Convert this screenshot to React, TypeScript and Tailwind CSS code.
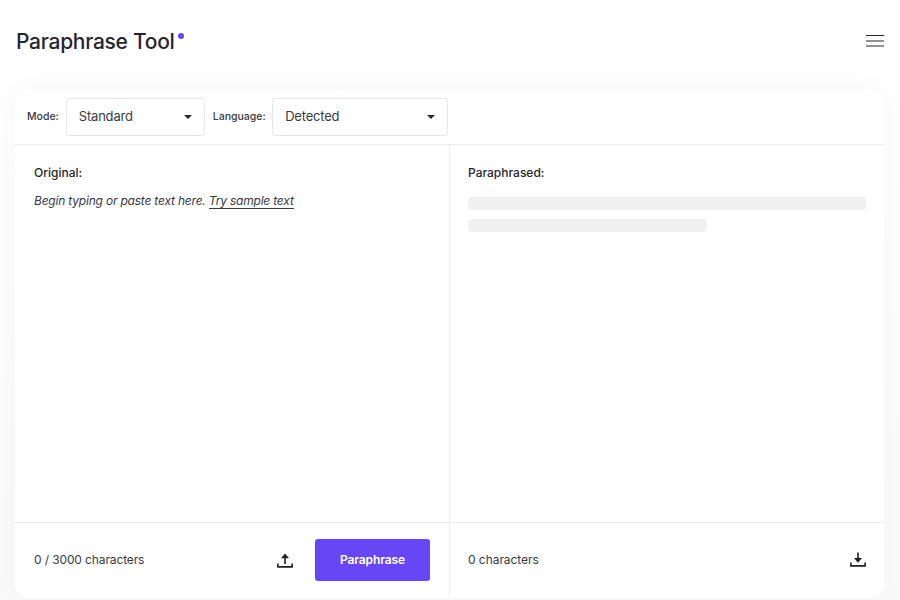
function Caret() {
  return <span className="h-0 w-0 border-x-[4px] border-t-[4px] border-x-transparent border-t-[#26262e]" />;
}

function Select({ value, width }: { value: string; width: string }) {
  return (
    <div className={`flex h-[38px] items-center justify-between rounded-[3px] border border-[#e6e6f0] bg-white pl-[12px] pr-[12px] text-[13px] tracking-[-0.2px] text-[#3a3a46] ${width}`}>
      <span>{value}</span>
      <Caret />
    </div>
  );
}

function UploadIcon() {
  return (
    <svg width="16" height="15" viewBox="0 0 16 15" fill="none" stroke="#1f1f27" strokeWidth="1.6">
      <path d="M8 11V3" />
      <path d="M8 .5 12 5.2H4Z" fill="#1f1f27" stroke="none" />
      <path d="M.9 10.5v3.4h14.2v-3.4" />
    </svg>
  );
}

function DownloadIcon() {
  return (
    <svg width="16" height="15" viewBox="0 0 16 15" fill="none" stroke="#1f1f27" strokeWidth="1.6">
      <path d="M8 .5v7" />
      <path d="M8 10.8 12 6H4Z" fill="#1f1f27" stroke="none" />
      <path d="M.9 10.5v3.4h14.2v-3.4" />
    </svg>
  );
}

function MenuIcon() {
  return (
    <svg width="18" height="12" viewBox="0 0 18 12" stroke="#26262e" strokeWidth="1">
      <path d="M0 .5h18M0 6h18M0 11h18" />
    </svg>
  );
}

export default function App() {
  return (
    <div className="h-[600px] overflow-hidden bg-gradient-to-b from-white to-[#fafafb] pl-[15px] pr-[16px] font-['Inter',sans-serif] text-[#26262e]">
      <header className="flex h-[90px] items-center justify-between pb-[8px]">
        <h1 className="relative ml-px text-[21px] font-[550] leading-none tracking-[-0.28px] text-[#26262e]">
          Paraphrase Tool
          <span className="absolute -right-[9.5px] top-[2px] h-[6px] w-[6px] rounded-full bg-[#6747f5]" />
        </h1>
        <MenuIcon />
      </header>

      <main className="flex h-[508px] flex-col rounded-[14px] bg-white shadow-[0_0_30px_rgba(30,30,60,0.03)]">
        <div className="flex h-[55px] shrink-0 items-start border-b border-[#ececf4] pl-[12px] pt-[8px]">
          <div className="flex h-[38px] items-center">
            <span className="mr-[7px] text-[10.5px] font-medium text-[#3a3a46]">Mode:</span>
            <Select value="Standard" width="w-[139px]" />
            <span className="ml-[8px] mr-[6.5px] text-[10.5px] font-medium text-[#3a3a46]">Language:</span>
            <Select value="Detected" width="w-[176px]" />
          </div>
        </div>

        <div className="flex min-h-0 flex-1">
          <section className="flex w-[435px] shrink-0 flex-col border-r border-[#ececf4]">
            <div className="flex-1 px-[19px] pt-[20px]">
              <h2 className="text-[12px] font-medium leading-[16px] text-[#26262e]">Original:</h2>
              <p className="mt-[12px] text-[12px] italic leading-[16px] tracking-[-0.2px] text-[#3a3a46]">
                Begin typing or paste text here.{" "}
                <span className="border-b border-[#3a3a46]">Try sample text</span>
              </p>
            </div>
            <div className="flex h-[76px] items-center border-t border-[#ececf4] px-[19px] pb-px">
              <span className="text-[12px] tracking-[-0.12px] text-[#3a3a46]">0 / 3000 characters</span>
              <span className="ml-auto mr-[22px] flex">
                <UploadIcon />
              </span>
              <button className="h-[42px] w-[115px] rounded-[3px] bg-[#6747f5] text-[12px] font-semibold tracking-[-0.1px] text-white">
                Paraphrase
              </button>
            </div>
          </section>

          <section className="flex min-w-0 flex-1 flex-col">
            <div className="flex-1 px-[18px] pt-[20px]">
              <h2 className="text-[12px] font-medium leading-[16px] text-[#26262e]">Paraphrased:</h2>
              <div className="mt-[16px] h-[13px] w-[398px] rounded-[4px] bg-[#f0f0f0]" />
              <div className="mt-[9px] h-[13px] w-[239px] rounded-[4px] bg-[#f0f0f0]" />
            </div>
            <div className="flex h-[76px] items-center justify-between border-t border-[#ececf4] pb-[2px] pl-[18px] pr-[18px]">
              <span className="text-[12px] tracking-[-0.05px] text-[#3a3a46]">0 characters</span>
              <DownloadIcon />
            </div>
          </section>
        </div>
      </main>
    </div>
  );
}
